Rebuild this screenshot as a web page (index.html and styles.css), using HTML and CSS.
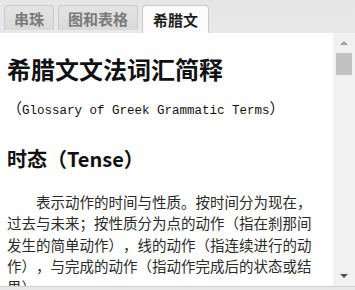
FILE: index.html
```html
<!DOCTYPE html>
<html lang="zh-CN">
<head>
    <meta charset="UTF-8">
    <meta name="viewport" content="width=device-width, initial-scale=1.0">
    <title>希腊文文法词汇简释</title>
    <link rel="stylesheet" href="styles.css">
</head>
<body>

    <div class="tabs">
        <div class="tab">串珠</div>
        <div class="tab">图和表格</div>
        <div class="tab active">希腊文</div>
    </div>

    <div class="panel">
        <div class="content">
            <h1>希腊文文法词汇简释</h1>
            <p class="subtitle"><span class="paren">（</span>Glossary of Greek Grammatic Terms<span class="paren">）</span></p>
            <h2>时态（Tense）</h2>
            <p class="text">表示动作的时间与性质。按时间分为现在，过去与未来；按性质分为点的动作（指在刹那间发生的简单动作），线的动作（指连续进行的动作），与完成的动作（指动作完成后的状态或结果）。</p>
        </div>
        <div class="scrollbar">
            <div class="arrow up"></div>
            <div class="thumb"></div>
            <div class="track"></div>
            <div class="arrow down"></div>
        </div>
    </div>

    <div class="bottom"></div>

</body>
</html>
```

FILE: styles.css
```css
body {
    margin: 0;
    width: 355px;
    height: 290px;
    overflow: hidden;
    background-color: #e8e8e8;
    font-family: "Noto Sans CJK SC", sans-serif;
    text-spacing-trim: space-all;
}

.tabs {
    display: flex;
    align-items: flex-start;
    gap: 4px;
    height: 33px;
    padding: 5px 0 0 4px;
    box-sizing: border-box;
    background: linear-gradient(#e6e6e6, #e9e9e9);
}

.tab {
    height: 25px;
    padding: 0 9px;
    box-sizing: border-box;
    border: 1px solid #c9c9c9;
    border-bottom: none;
    border-radius: 4px 4px 0 0;
    background: linear-gradient(#e4e4e4, #d9d9d9);
    color: #7a7a7a;
    font-size: 15px;
    font-weight: bold;
    line-height: 25px;
}

.tab.active {
    height: 28px;
    padding: 0 10px;
    background: #fbfbfb;
    color: #1e1e1e;
    line-height: 27px;
}

.panel {
    display: flex;
    height: 253px;
    background-color: white;
}

.content {
    flex: 1;
    padding: 0 14px 0 7px;
    overflow: hidden;
    color: #111;
}

h1 {
    margin: 20px 0 0;
    font-size: 24px;
    line-height: 32px;
    font-weight: bold;
}

.subtitle {
    margin: 13px 0 0;
    font-family: "Liberation Mono", "Noto Sans CJK SC", monospace;
    font-size: 12.5px;
    line-height: 20px;
    color: #111;
}

.paren {
    font-family: "Noto Sans CJK SC", sans-serif;
    font-size: 15px;
}

h2 {
    margin: 24px 0 0;
    font-size: 20px;
    line-height: 28px;
    font-weight: bold;
}

.text {
    margin: 18px 0 0;
    font-size: 14.5px;
    line-height: 21.3px;
    text-indent: 2em;
    color: #2a2a2a;
}

.scrollbar {
    display: flex;
    flex-direction: column;
    align-items: center;
    width: 22px;
    background-color: #f1f1f1;
}

.arrow {
    width: 0;
    height: 0;
    border-left: 4px solid transparent;
    border-right: 4px solid transparent;
}

.arrow.up {
    margin-top: 8px;
    border-bottom: 4px solid #a3a3a3;
}

.arrow.down {
    margin-bottom: 8px;
    border-top: 4px solid #505050;
}

.thumb {
    width: 16px;
    height: 22px;
    margin-top: 8px;
    background-color: #c1c1c1;
}

.track {
    flex: 1;
}

.bottom {
    height: 4px;
    border-top: 1px solid #cfcfcf;
}
```
